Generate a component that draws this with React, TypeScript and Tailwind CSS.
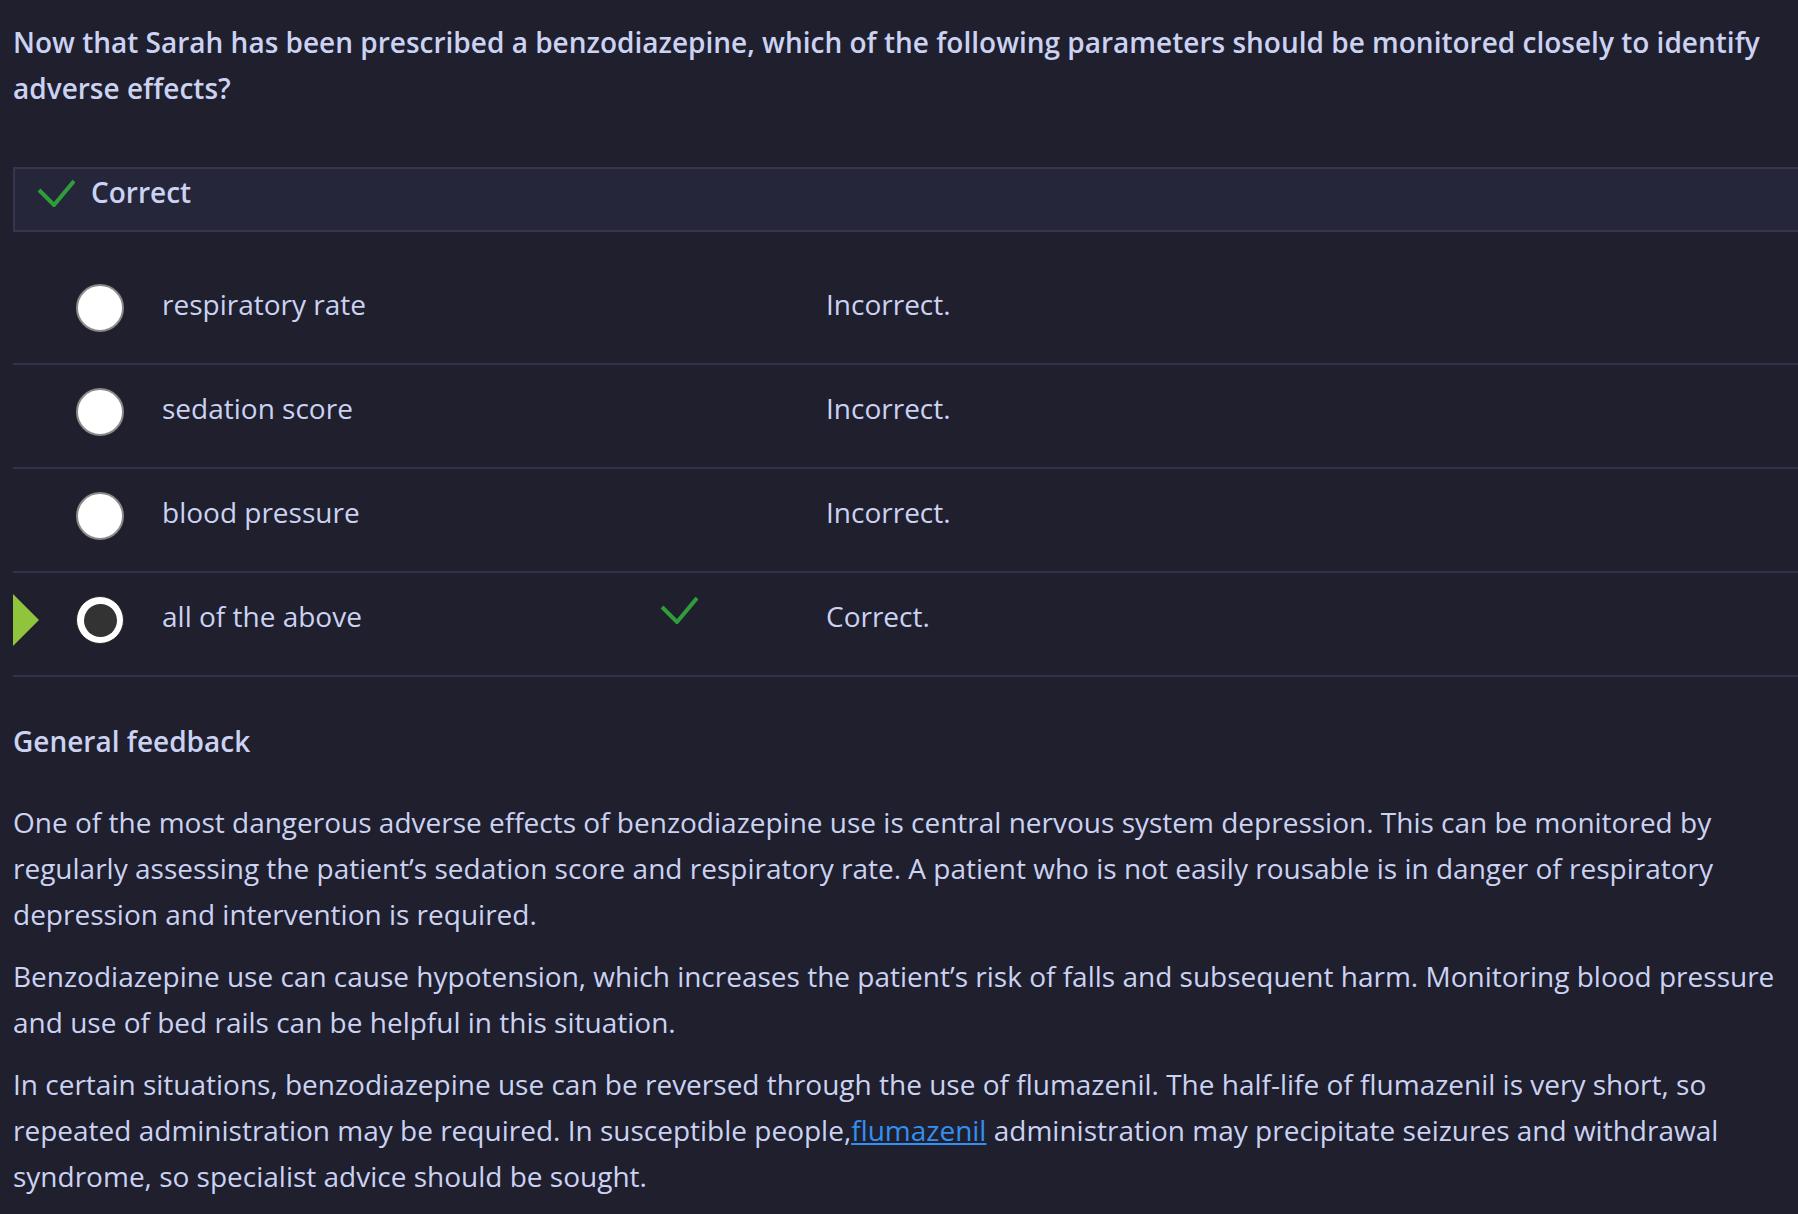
import React from "react";

type Option = {
  label: string;
  feedback: string;
  selected?: boolean;
  correct?: boolean;
};

const options: Option[] = [
  { label: "respiratory rate", feedback: "Incorrect." },
  { label: "sedation score", feedback: "Incorrect." },
  { label: "blood pressure", feedback: "Incorrect." },
  { label: "all of the above", feedback: "Correct.", selected: true, correct: true },
];

function Check({ className }: { className?: string }) {
  return (
    <svg width="38" height="28" viewBox="0 0 38 28" className={className}>
      <polyline
        points="2,11 17,26 37,2"
        fill="none"
        stroke="#2f9e3a"
        strokeWidth="4"
      />
    </svg>
  );
}

function Radio({ selected }: { selected?: boolean }) {
  if (selected) {
    return (
      <div className="w-12 h-12 shrink-0 rounded-full bg-white border border-[#2a2a2a] flex items-center justify-center">
        <div className="w-[33px] h-[33px] rounded-full bg-[#333333]" />
      </div>
    );
  }
  return <div className="w-12 h-12 shrink-0 rounded-full bg-white border-2 border-[#8a8a8a]" />;
}

function OptionRow({ option }: { option: Option }) {
  return (
    <div className="relative flex items-start h-[104px] pt-[20px] border-b-2 border-[#34314b]">
      {option.selected && (
        <svg
          width="26"
          height="52"
          viewBox="0 0 26 52"
          className="absolute left-0 top-[21px]"
        >
          <polygon points="0,0 26,26 0,52" fill="#8fc43c" />
        </svg>
      )}
      <div className="w-[63px] shrink-0" />
      <div className="mt-[3px]">
        <Radio selected={option.selected} />
      </div>
      <div className="w-[38px] shrink-0" />
      <div className="w-[500px] shrink-0">{option.label}</div>
      <div className="w-[164px] shrink-0 pt-[3px]">
        {option.correct && <Check className="-ml-[2px]" />}
      </div>
      <div>{option.feedback}</div>
    </div>
  );
}

export default function App() {
  return (
    <div
      className="w-full min-h-screen overflow-hidden bg-[#1f1f2e] text-[#cbd2f2]"
      style={{ fontFamily: '"Open Sans", "Noto Sans", sans-serif' }}
    >
      <div className="w-[1790px] ml-[13px] pt-[19px] text-[28px] leading-[46px]">
        <p className="font-semibold">
          Now that Sarah has been prescribed a benzodiazepine, which of the following
          parameters should be monitored closely to identify adverse effects?
        </p>

        <div className="mt-[56px] flex items-start h-[65px] border-2 border-[#37344f] bg-[#25263a]">
          <Check className="ml-[22px] mt-[10px] shrink-0" />
          <span className="ml-[16px] font-semibold">Correct</span>
        </div>

        <div className="mt-[29px]">
          {options.map((o) => (
            <OptionRow key={o.label} option={o} />
          ))}
        </div>

        <h3 className="mt-[41px] font-semibold">General feedback</h3>

        <div className="mt-[35px]">
          <p className="mb-4">
            One of the most dangerous adverse effects of benzodiazepine use is central
            nervous system depression. This can be monitored by regularly assessing the
            patient’s sedation score and respiratory rate. A patient who is not easily
            rousable is in danger of respiratory depression and intervention is required.
          </p>
          <p className="mb-4">
            Benzodiazepine use can cause hypotension, which increases the patient’s risk
            of falls and subsequent harm. Monitoring blood pressure and use of bed rails
            can be helpful in this situation.
          </p>
          <p>
            In certain situations, benzodiazepine use can be reversed through the use of
            flumazenil. The half-life of flumazenil is very short, so repeated
            administration may be required. In susceptible people,
            <a href="#" className="text-[#338ff0] underline">
              flumazenil
            </a>{" "}
            administration may precipitate seizures and withdrawal syndrome, so
            specialist advice should be sought.
          </p>
        </div>
      </div>
    </div>
  );
}
